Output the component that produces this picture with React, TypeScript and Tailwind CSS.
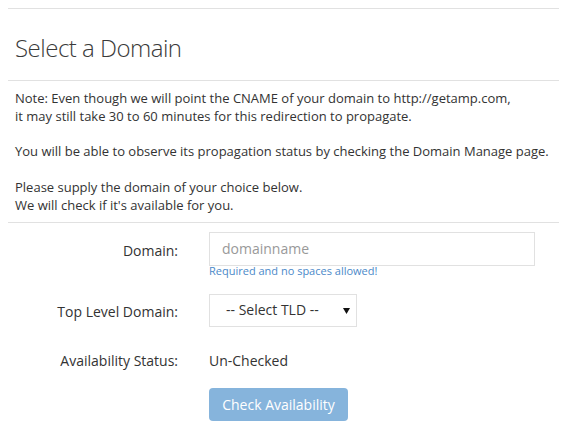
import { useState } from "react";

const fontStack = { fontFamily: '"Open Sans", "Noto Sans", Arial, sans-serif' };

function FormRow({ label, children, labelPad = "pt-0" }: { label: string; children: React.ReactNode; labelPad?: string }) {
  return (
    <div className="grid grid-cols-[170px_1fr] gap-x-[31px]">
      <label className={`${labelPad} text-right text-[14px] leading-5 text-[#333]`}>{label}</label>
      <div className="text-[14px] leading-5">{children}</div>
    </div>
  );
}

export default function App() {
  const [domain, setDomain] = useState("");

  return (
    <div className="min-h-screen bg-white pt-2 text-[#333]" style={fontStack}>
      <div className="ml-2 w-[551px]">
        <div className="border-t border-[#e1e1e1]" />
        <h1 className="mt-[23px] px-[7px] text-[24px] font-light leading-[32px] tracking-[-0.5px] text-[#3a3a3a]">
          Select a Domain
        </h1>
        <div className="mt-4 border-t border-[#e1e1e1]" />

        <div className="mt-[9px] px-[7px] text-[13px] leading-[17.8px]">
          <p>
            Note: Even though we will point the CNAME of your domain to http://getamp.com,
            <br />
            it may still take 30 to 60 minutes for this redirection to propagate.
          </p>
          <p className="mt-[17.8px]">You will be able to observe its propagation status by checking the Domain Manage page.</p>
          <p className="mt-[17.8px]">
            Please supply the domain of your choice below.
            <br />
            We will check if it's available for you.
          </p>
        </div>
        <div className="mt-[7px] border-t border-[#e1e1e1]" />

        <form className="mt-[9px]" onSubmit={(e) => e.preventDefault()}>
          <FormRow label="Domain:" labelPad="pt-[9px]">
            <input
              value={domain}
              onChange={(e) => setDomain(e.target.value)}
              placeholder="domainname"
              className="block h-[34px] w-[326px] border border-[#e1e1e1] px-3 text-[14px] text-[#333] outline-none placeholder:text-[#999]"
              style={fontStack}
            />
            <p className="text-[11px] leading-[9px] text-[#4b89c9]">Required and no spaces allowed!</p>
          </FormRow>

          <div className="mt-[19px]">
            <FormRow label="Top Level Domain:" labelPad="pt-[8px]">
              <div className="flex h-[33px] w-[148px] items-center justify-between border border-[#e1e1e1] pl-4 pr-[6px]">
                <span>-- Select TLD --</span>
                <svg width="7" height="6" viewBox="0 0 7 6" className="mt-px">
                  <path d="M0 0h7L3.5 6z" fill="#111" />
                </svg>
              </div>
            </FormRow>
          </div>

          <div className="mt-[24px]">
            <FormRow label="Availability Status:">
              <div>Un-Checked</div>
            </FormRow>
          </div>

          <div className="mt-[17px] grid grid-cols-[170px_1fr] gap-x-[31px]">
            <div />
            <button
              type="submit"
              disabled
              className="block h-[33px] w-[139px] rounded bg-[#86b4dc] text-[14px] text-white"
              style={fontStack}
            >
              Check Availability
            </button>
          </div>
        </form>
      </div>
    </div>
  );
}
